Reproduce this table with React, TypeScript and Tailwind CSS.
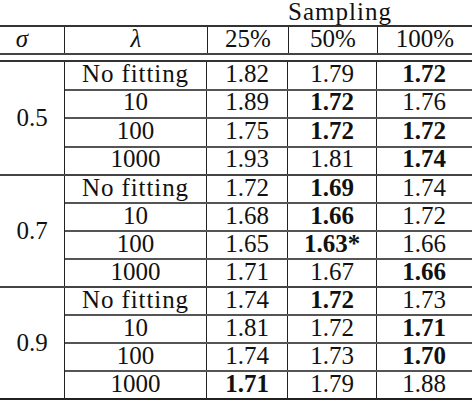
const groups = [
  {
    sigma: '0.5',
    rows: [
      { lambda: 'No fitting', v: [['1.82', false], ['1.79', false], ['1.72', true]] },
      { lambda: '10', v: [['1.89', false], ['1.72', true], ['1.76', false]] },
      { lambda: '100', v: [['1.75', false], ['1.72', true], ['1.72', true]] },
      { lambda: '1000', v: [['1.93', false], ['1.81', false], ['1.74', true]] },
    ],
  },
  {
    sigma: '0.7',
    rows: [
      { lambda: 'No fitting', v: [['1.72', false], ['1.69', true], ['1.74', false]] },
      { lambda: '10', v: [['1.68', false], ['1.66', true], ['1.72', false]] },
      { lambda: '100', v: [['1.65', false], ['1.63*', true], ['1.66', false]] },
      { lambda: '1000', v: [['1.71', false], ['1.67', false], ['1.66', true]] },
    ],
  },
  {
    sigma: '0.9',
    rows: [
      { lambda: 'No fitting', v: [['1.74', false], ['1.72', true], ['1.73', false]] },
      { lambda: '10', v: [['1.81', false], ['1.72', false], ['1.71', true]] },
      { lambda: '100', v: [['1.74', false], ['1.73', false], ['1.70', true]] },
      { lambda: '1000', v: [['1.71', true], ['1.79', false], ['1.88', false]] },
    ],
  },
] as { sigma: string; rows: { lambda: string; v: [string, boolean][] }[] }[];

const valueWidths = ['w-[81px]', 'w-[89px]', 'w-[94px]'];

export default function App() {
  return (
    <div className="w-[472px] h-[400px] bg-white text-[#111] text-[25px] leading-[20px] overflow-hidden font-['Liberation_Serif','Times_New_Roman',serif]">
      <div className="h-[25px] flex">
        <div className="w-[208px]" />
        <div className="flex-1 flex items-center justify-center tracking-[1px] pb-[2px]">Sampling</div>
      </div>
      <div className="h-[2px] bg-[#333]" />

      <div className="h-[26px] flex">
        <div className="w-[65px] border-r border-[#222] flex items-center justify-center italic pb-[2px] pr-[20px]">σ</div>
        <div className="w-[143px] border-r border-[#222] flex items-center justify-center italic pb-[2px]">λ</div>
        <div className="w-[81px] border-r border-[#222] flex items-center justify-center pb-[2px]">25%</div>
        <div className="w-[89px] border-r border-[#222] flex items-center justify-center pb-[2px]">50%</div>
        <div className="w-[94px] flex items-center justify-center pb-[2px]">100%</div>
      </div>
      <div className="h-[2px] bg-[#444]" />
      <div className="h-[5px]" />
      <div className="h-[2px] bg-[#333]" />

      {groups.map((g, gi) => (
        <div key={g.sigma} className={`h-[112px] flex ${gi > 0 ? 'border-t-2 border-[#444]' : ''}`}>
          <div className="w-[65px] border-r border-[#222] flex items-center justify-center">{g.sigma}</div>
          <div className="flex-1 flex flex-col">
            {g.rows.map((r, ri) => (
              <div key={r.lambda} className={`flex-1 min-h-0 flex ${ri > 0 ? 'border-t-2 border-[#555]' : ''}`}>
                <div
                  className={`w-[142px] border-r border-[#222] flex items-center justify-center pb-[3px] ${
                    r.lambda === 'No fitting' ? 'tracking-[0.9px]' : ''
                  }`}
                >
                  {r.lambda}
                </div>
                {r.v.map(([val, bold], vi) => (
                  <div
                    key={vi}
                    className={`${valueWidths[vi]} ${vi < 2 ? 'border-r border-[#222]' : ''} flex items-center justify-center pb-[3px] ${
                      bold ? 'font-bold' : ''
                    }`}
                  >
                    {val}
                  </div>
                ))}
              </div>
            ))}
          </div>
        </div>
      ))}
      <div className="h-[2px] bg-[#222]" />
    </div>
  );
}
